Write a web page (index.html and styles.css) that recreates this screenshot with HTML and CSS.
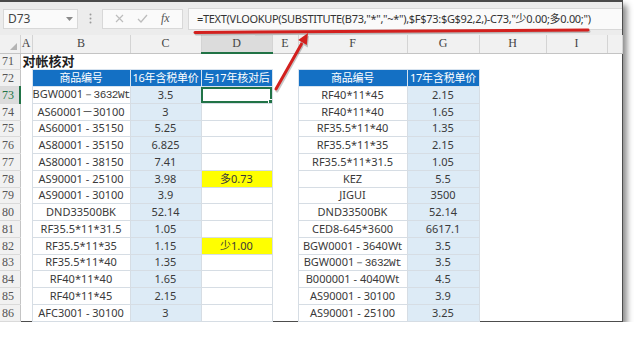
FILE: index.html
```html
<!DOCTYPE html>
<html lang="zh">
<head>
  <meta charset="UTF-8" />
  <meta name="viewport" content="width=device-width, initial-scale=1.0" />
  <title>对帐核对</title>
  <link rel="stylesheet" href="styles.css">
</head>
<body>
  <div class="shot">
    <div class="toolbar">
      <div class="nameBox">
        <span>D73</span>
        <svg class="caret" width="7" height="4" viewBox="0 0 7 4"><path d="M0 0h7L3.5 4z" fill="#8a8a8a"/></svg>
      </div>
      <div class="grip">
        <svg width="3" height="11" viewBox="0 0 3 11"><circle cx="1.5" cy="1.5" r="1" fill="#9a9a9a"/><circle cx="1.5" cy="5.5" r="1" fill="#9a9a9a"/><circle cx="1.5" cy="9.5" r="1" fill="#9a9a9a"/></svg>
      </div>
      <div class="fnBox">
        <svg width="9" height="9" viewBox="0 0 9 9"><path d="M1 1l7 7M8 1l-7 7" stroke="#bdbdbd" stroke-width="1.2" fill="none"/></svg>
        <svg width="11" height="9" viewBox="0 0 11 9"><path d="M1 5l3 3 6-7" stroke="#bdbdbd" stroke-width="1.3" fill="none"/></svg>
        <span class="fx"><i>f</i>x</span>
      </div>
      <div class="formula">=TEXT(VLOOKUP(SUBSTITUTE(B73,"*","~*"),$F$73:$G$92,2,)-C73,"少0.00;多0.00;")</div>
    </div>

    <table class="sheet">
      <colgroup>
        <col style="width:20px"><col style="width:12px"><col style="width:98px"><col style="width:71px"><col style="width:71px"><col style="width:26px"><col style="width:109px"><col style="width:72px"><col style="width:67px"><col style="width:61px"><col style="width:15px">
      </colgroup>
      <thead>
        <tr>
          <th class="corner"><span class="tri"></span></th>
          <th>A</th><th>B</th><th>C</th><th class="active">D</th><th>E</th><th>F</th><th>G</th><th>H</th><th>I</th><th></th>
        </tr>
      </thead>
      <tbody>
        <tr><td class="rn">71</td><td class="title" colspan="3">对帐核对</td><td></td><td></td><td></td><td></td><td></td><td></td><td></td></tr>
        <tr><td class="rn">72</td><td></td><td class="hd">商品编号</td><td class="hd">16年含税单价</td><td class="hd">与17年核对后</td><td></td><td class="hd">商品编号</td><td class="hd">17年含税单价</td><td></td><td></td><td></td></tr>
        <tr><td class="rn sel">73</td><td></td><td class="c">BGW0001<span class="sim">－3632Wt</span></td><td class="c blue">3.5</td><td class="c cur"><span class="handle"></span></td><td></td><td class="c">RF40*11*45</td><td class="c blue">2.15</td><td></td><td></td><td></td></tr>
        <tr><td class="rn">74</td><td></td><td class="c">AS60001－30100</td><td class="c blue">3</td><td class="c"></td><td></td><td class="c">RF40*11*40</td><td class="c blue">1.65</td><td></td><td></td><td></td></tr>
        <tr><td class="rn">75</td><td></td><td class="c">AS60001 - 35150</td><td class="c blue">5.25</td><td class="c"></td><td></td><td class="c">RF35.5*11*40</td><td class="c blue">1.35</td><td></td><td></td><td></td></tr>
        <tr><td class="rn">76</td><td></td><td class="c">AS80001 - 35150</td><td class="c blue">6.825</td><td class="c"></td><td></td><td class="c">RF35.5*11*35</td><td class="c blue">2.15</td><td></td><td></td><td></td></tr>
        <tr><td class="rn">77</td><td></td><td class="c">AS80001 - 38150</td><td class="c blue">7.41</td><td class="c"></td><td></td><td class="c">RF35.5*11*31.5</td><td class="c blue">1.05</td><td></td><td></td><td></td></tr>
        <tr><td class="rn">78</td><td></td><td class="c">AS90001 - 25100</td><td class="c blue">3.98</td><td class="c yellow">多0.73</td><td></td><td class="c">KEZ</td><td class="c blue">5.5</td><td></td><td></td><td></td></tr>
        <tr><td class="rn">79</td><td></td><td class="c">AS90001 - 30100</td><td class="c blue">3.9</td><td class="c"></td><td></td><td class="c">JIGUI</td><td class="c blue">3500</td><td></td><td></td><td></td></tr>
        <tr><td class="rn">80</td><td></td><td class="c">DND33500BK</td><td class="c blue">52.14</td><td class="c"></td><td></td><td class="c">DND33500BK</td><td class="c blue">52.14</td><td></td><td></td><td></td></tr>
        <tr><td class="rn">81</td><td></td><td class="c">RF35.5*11*31.5</td><td class="c blue">1.05</td><td class="c"></td><td></td><td class="c">CED8-645*3600</td><td class="c blue">6617.1</td><td></td><td></td><td></td></tr>
        <tr><td class="rn">82</td><td></td><td class="c">RF35.5*11*35</td><td class="c blue">1.15</td><td class="c yellow">少1.00</td><td></td><td class="c">BGW0001 - 3640Wt</td><td class="c blue">3.5</td><td></td><td></td><td></td></tr>
        <tr><td class="rn">83</td><td></td><td class="c">RF35.5*11*40</td><td class="c blue">1.35</td><td class="c"></td><td></td><td class="c">BGW0001<span class="sim">－3632Wt</span></td><td class="c blue">3.5</td><td></td><td></td><td></td></tr>
        <tr><td class="rn">84</td><td></td><td class="c">RF40*11*40</td><td class="c blue">1.65</td><td class="c"></td><td></td><td class="c">B000001 - 4040Wt</td><td class="c blue">4.5</td><td></td><td></td><td></td></tr>
        <tr><td class="rn">85</td><td></td><td class="c">RF40*11*45</td><td class="c blue">2.15</td><td class="c"></td><td></td><td class="c">AS90001 - 30100</td><td class="c blue">3.9</td><td></td><td></td><td></td></tr>
        <tr><td class="rn">86</td><td></td><td class="c">AFC3001 - 30100</td><td class="c blue">3</td><td class="c"></td><td></td><td class="c">AS90001 - 25100</td><td class="c blue">3.25</td><td></td><td></td><td></td></tr>
      </tbody>
    </table>

    <!-- red markup drawn over the screenshot -->
    <svg class="marks" width="640" height="337" viewBox="0 0 640 337">
      <g stroke="rgba(0,0,0,0.22)" stroke-width="3" stroke-linecap="round" fill="none">
        <path d="M196 34L589 31.5"/>
        <path d="M277 91L302 46"/>
      </g>
      <path d="M309 35.5l-1.2 12-8.6-5z" fill="rgba(0,0,0,0.22)"/>
      <g stroke="#d3201e" stroke-width="3" stroke-linecap="round" fill="none">
        <path d="M195 32.5L588 30"/>
        <path d="M276 89L301.5 44"/>
      </g>
      <path d="M308 33l-1.2 12-8.6-5z" fill="#d3201e"/>
    </svg>
  </div>
</body>
</html>
```

FILE: styles.css
```css
* {
  margin: 0;
  padding: 0;
  box-sizing: border-box;
}
body {
  background: #fff;
  font-family: "Noto Sans", "Noto Sans CJK SC", sans-serif;
}
.shot {
  position: relative;
  width: 623px;
  height: 322px;
  background: #fff;
  border-top: 2px solid #4a4a4a;
  border-right: 1px solid #4d4d4d;
  border-bottom: 1px solid #4d4d4d;
  box-shadow: 4px 5px 6px rgba(0, 0, 0, 0.45);
}
.toolbar {
  height: 33px;
  background: #ececec;
  display: flex;
  align-items: center;
  padding-left: 3px;
}
.nameBox {
  width: 75px;
  height: 20px;
  background: #fafafa;
  border: 1px solid #d8d8d8;
  display: flex;
  align-items: center;
  justify-content: space-between;
  padding: 0 4px 0 4px;
  font-size: 12px;
  color: #444;
}
.grip {
  width: 24px;
  display: flex;
  justify-content: center;
}
.fnBox {
  width: 81px;
  height: 20px;
  background: #fafafa;
  border: 1px solid #d8d8d8;
  display: flex;
  align-items: center;
  justify-content: space-around;
  padding: 0 6px;
}
.fx {
  font-family: "Liberation Serif", serif;
  font-size: 12px;
  color: #555;
  font-style: italic;
}
.formula {
  flex: 1;
  height: 22px;
  margin-left: 5px;
  background: #fafafa;
  border: 1px solid #d8d8d8;
  border-right: none;
  font-size: 11px;
  line-height: 20px;
  color: #333;
  padding-left: 8px;
  white-space: nowrap;
  overflow: hidden;
  letter-spacing: -0.3px;
}
.sheet {
  width: 622px;
  border-collapse: collapse;
  table-layout: fixed;
}
.sheet th {
  height: 18px;
  background: #f1f1f1;
  border-right: 1px solid #d4d4d4;
  border-bottom: 1px solid #c4c4c4;
  font-family: "Liberation Serif", serif;
  font-weight: normal;
  font-size: 12px;
  color: #444;
}
.sheet th.active {
  background: #dcdcdc;
  border-bottom: 2px solid #217346;
}
.sheet .corner {
  position: relative;
}
.tri {
  position: absolute;
  right: 3px;
  bottom: 3px;
  width: 0;
  height: 0;
  border-left: 7px solid transparent;
  border-bottom: 7px solid #b4b4b4;
}
.sheet tbody tr {
  height: 16.75px;
}
.sheet td {
  padding: 0;
  font-size: 11px;
  line-height: 14px;
  text-align: center;
  white-space: nowrap;
  overflow: hidden;
  color: #3a3a3a;
}
.sheet td.rn {
  background: #f1f1f1;
  border-right: 1px solid #c4c4c4;
  border-bottom: 1px solid #dadada;
  text-align: left;
  padding-left: 2px;
  font-family: "Liberation Serif", serif;
  font-size: 12px;
  color: #555;
}
.sheet td.rn.sel {
  background: #dcdcdc;
  color: #217346;
  border-right: 2px solid #217346;
}
.sheet td.title {
  text-align: left;
  font-weight: bold;
  font-size: 13px;
  color: #1e1e1e;
  padding-left: 2px;
}
.sheet td.hd {
  background: #1470c4;
  color: #fff;
  border: 1px solid #d7e3ef;
  font-size: 11px;
  letter-spacing: -0.2px;
}
.sheet td.c {
  border: 1px solid #d6dde4;
}
.sheet td.blue {
  background: #ddebf6;
}
.sheet td.yellow {
  background: #ffff00;
}
.sheet td.cur {
  position: relative;
  outline: 2px solid #217346;
  outline-offset: -2px;
}
.handle {
  position: absolute;
  right: -1px;
  bottom: -1px;
  width: 5px;
  height: 5px;
  background: #217346;
  border: 1px solid #fff;
}
.sim {
  font-family: "Liberation Mono", monospace;
  font-size: 11px;
  letter-spacing: -0.5px;
}
.marks {
  position: absolute;
  top: -2px;
  left: 0;
  pointer-events: none;
}
```
